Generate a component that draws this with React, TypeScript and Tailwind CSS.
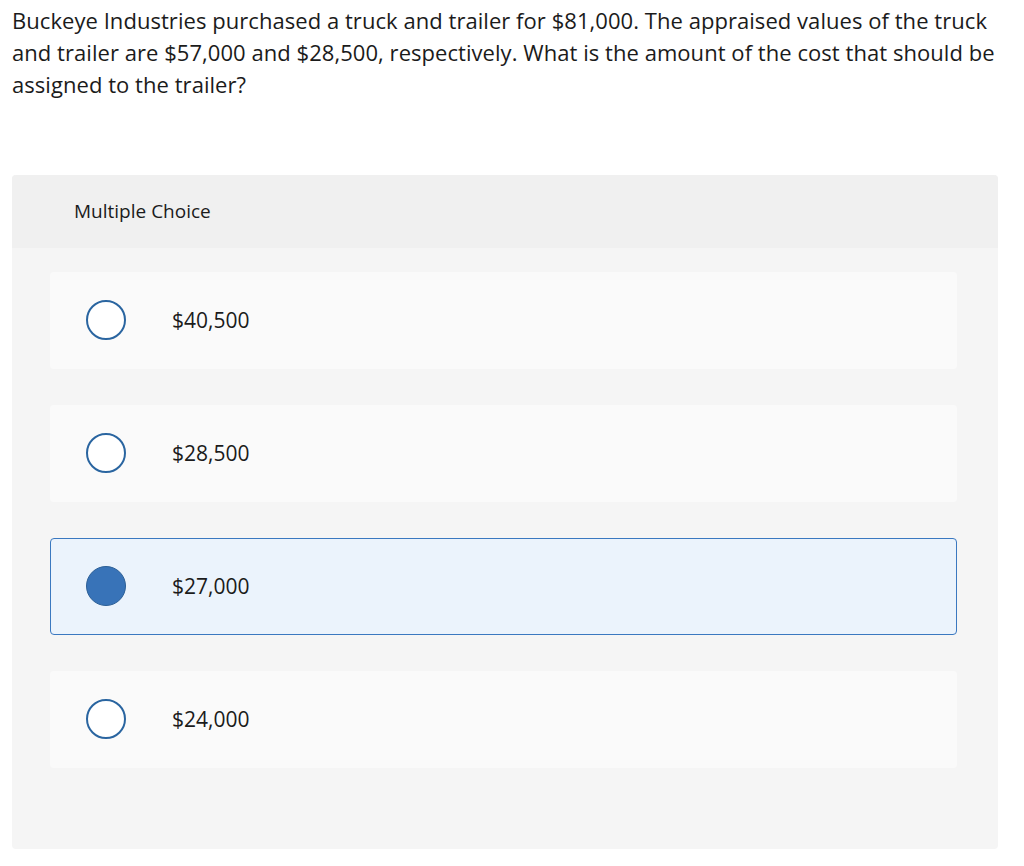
const options = [
  { label: "$40,500", selected: false },
  { label: "$28,500", selected: false },
  { label: "$27,000", selected: true },
  { label: "$24,000", selected: false },
];

const Radio = ({ selected }: { selected: boolean }) =>
  selected ? (
    <span className="block h-10 w-10 shrink-0 rounded-full border border-[#2c5f96] bg-[#3873b8]" />
  ) : (
    <span className="block h-10 w-10 shrink-0 rounded-full border-2 border-[#2a65a0] bg-white" />
  );

const App = () => {
  return (
    <div className="min-h-[866px] bg-white px-3 pt-[4px] font-['Open_Sans',sans-serif] text-[#1b1b1b]">
      <p className="text-[22px] leading-[32px] tracking-[0.05px]">
        Buckeye Industries purchased a truck and trailer for $81,000. The appraised values of the truck
        <br />
        and trailer are $57,000 and $28,500, respectively. What is the amount of the cost that should be
        <br />
        assigned to the trailer?
      </p>

      <div className="mt-[75px] w-[986px] overflow-hidden rounded bg-[#f5f5f5]">
        <div className="flex h-[73px] items-center bg-[#f0f0f0] pl-[62px] text-[19px]">
          Multiple Choice
        </div>
        <div className="flex flex-col gap-[36.5px] pb-[81px] pl-[38px] pr-[41px] pt-6">
          {options.map((o) => (
            <div
              key={o.label}
              className={
                o.selected
                  ? "flex h-[96.5px] items-center gap-[46px] rounded border border-[#3a78c0] bg-[#ebf3fc] pl-[35px]"
                  : "flex h-[96.5px] items-center gap-[46px] rounded bg-[#fafafa] pl-9"
              }
            >
              <Radio selected={o.selected} />
              <span className="text-[21px]">{o.label}</span>
            </div>
          ))}
        </div>
      </div>
    </div>
  );
};

export default App;
